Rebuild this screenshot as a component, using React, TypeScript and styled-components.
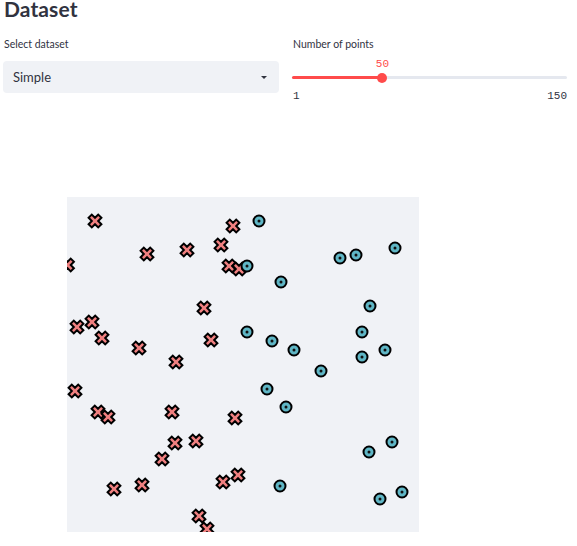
import React from "react";
import styled, { createGlobalStyle } from "styled-components";

const GlobalStyle = createGlobalStyle`
  html, body { margin: 0; padding: 0; background: #ffffff; }
  body { font-family: "Lato", "Open Sans", sans-serif; color: #31333F; }
`;

const Page = styled.div`
  padding: 0 10px 0 3px;
  width: 577px;
  box-sizing: border-box;
`;

const Title = styled.h1`
  margin: -2px 0 0 1px;
  font-size: 21px;
  line-height: 22px;
  font-weight: 700;
  color: #31333F;
  letter-spacing: 0.1px;
`;

const Columns = styled.div`
  display: grid;
  grid-template-columns: 276px 1fr;
  column-gap: 13px;
  margin-top: 17px;
`;

const Field = styled.div`
  display: flex;
  flex-direction: column;
`;

const Label = styled.label`
  font-size: 10.5px;
  line-height: 14px;
  color: #31333F;
  padding-left: 1px;
  height: 14px;
`;

const SelectBox = styled.div`
  margin-top: 10px;
  height: 32px;
  border-radius: 4px;
  background: #F0F2F6;
  display: flex;
  align-items: center;
  justify-content: space-between;
  padding: 0 12px 0 10px;
  font-size: 13px;
  color: #31333F;
`;

const Caret = styled.span`
  width: 0;
  height: 0;
  border-left: 3px solid transparent;
  border-right: 3px solid transparent;
  border-top: 3.5px solid #31333F;
`;

const SliderWrap = styled.div`
  position: relative;
  height: 60px;
`;

const Mono = styled.span<{ $color?: string }>`
  font-family: "Liberation Mono", "DejaVu Sans Mono", monospace;
  font-size: 11px;
  line-height: 12px;
  color: ${(p) => p.$color || "#31333F"};
`;

const ValueLabel = styled(Mono)`
  position: absolute;
  top: 7px;
  transform: translateX(-50%);
`;

const Track = styled.div`
  position: absolute;
  top: 25px;
  left: 0;
  right: 0;
  height: 3px;
  border-radius: 2px;
  background: #E5E8EF;
`;

const Fill = styled.div`
  position: absolute;
  left: 0;
  top: 0;
  bottom: 0;
  border-radius: 2px;
  background: #FF4B4B;
`;

const Thumb = styled.div`
  position: absolute;
  top: -3.5px;
  width: 10px;
  height: 10px;
  border-radius: 50%;
  background: #FF4B4B;
  transform: translateX(-50%);
`;

const TickRow = styled.div`
  position: absolute;
  top: 39px;
  left: 1px;
  right: 0;
  display: flex;
  justify-content: space-between;
`;

const Figure = styled.div`
  margin-top: 86px;
  padding-left: 64px;
`;

const Plot = styled.svg`
  display: block;
  background: #F0F2F6;
  overflow: hidden;
`;

const crosses: [number, number][] = [
  [28, 24], [166, 29], [80, 57], [120, 53], [154, 48], [0.5, 68], [162, 69], [172, 72],
  [137, 111], [10, 130], [25, 125], [35, 141], [72, 151], [144, 143], [109, 165],
  [8, 194], [31, 215], [41, 220], [105, 215], [168, 221], [129, 244], [108, 246],
  [95, 262], [171, 278], [156, 285], [47, 292], [75, 288], [132, 319], [140, 332],
];

const circles: [number, number][] = [
  [192, 24], [180, 69], [214, 85], [273, 61], [289, 58], [328, 51], [303, 109],
  [180, 135], [205, 144], [227, 153], [295, 135], [318, 153], [295, 160], [254, 174],
  [200, 192], [219, 210], [325, 245], [302, 255], [213, 289], [335, 295], [313, 302],
];

const U = 3.2;
const xPts = [
  [-1, -2], [0, -1], [1, -2], [2, -1], [1, 0], [2, 1], [1, 2], [0, 1], [-1, 2], [-2, 1], [-1, 0], [-2, -1],
]
  .map(([x, y]) => `${x * U},${y * U}`)
  .join(" ");

const XMark = ({ x, y }: { x: number; y: number }) => (
  <polygon
    points={xPts}
    transform={`translate(${x} ${y})`}
    fill="#F08080"
    stroke="#000"
    strokeWidth={2}
    strokeLinejoin="miter"
  />
);

const OMark = ({ x, y }: { x: number; y: number }) => (
  <g transform={`translate(${x} ${y})`}>
    <circle r={5.5} fill="#5FB6C5" stroke="#000" strokeWidth={2} />
    <circle r={1.5} fill="#111" />
  </g>
);

const min = 1;
const max = 150;
const value = 50;

export default function App() {
  const pct = ((value - min) / (max - min)) * 100;
  return (
    <>
      <GlobalStyle />
      <Page>
        <Title>Dataset</Title>
        <Columns>
          <Field>
            <Label>Select dataset</Label>
            <SelectBox>
              <span>Simple</span>
              <Caret />
            </SelectBox>
          </Field>
          <Field>
            <Label>Number of points</Label>
            <SliderWrap>
              <ValueLabel $color="#FF4B4B" style={{ left: `${pct}%` }}>
                {value}
              </ValueLabel>
              <Track>
                <Fill style={{ width: `${pct}%` }} />
                <Thumb style={{ left: `${pct}%` }} />
              </Track>
              <TickRow>
                <Mono>{min}</Mono>
                <Mono>{max}</Mono>
              </TickRow>
            </SliderWrap>
          </Field>
        </Columns>
        <Figure>
          <Plot width={352} height={335} viewBox="0 0 352 335">
            {crosses.map(([x, y], i) => (
              <XMark key={`x${i}`} x={x} y={y} />
            ))}
            {circles.map(([x, y], i) => (
              <OMark key={`o${i}`} x={x} y={y} />
            ))}
          </Plot>
        </Figure>
      </Page>
    </>
  );
}
